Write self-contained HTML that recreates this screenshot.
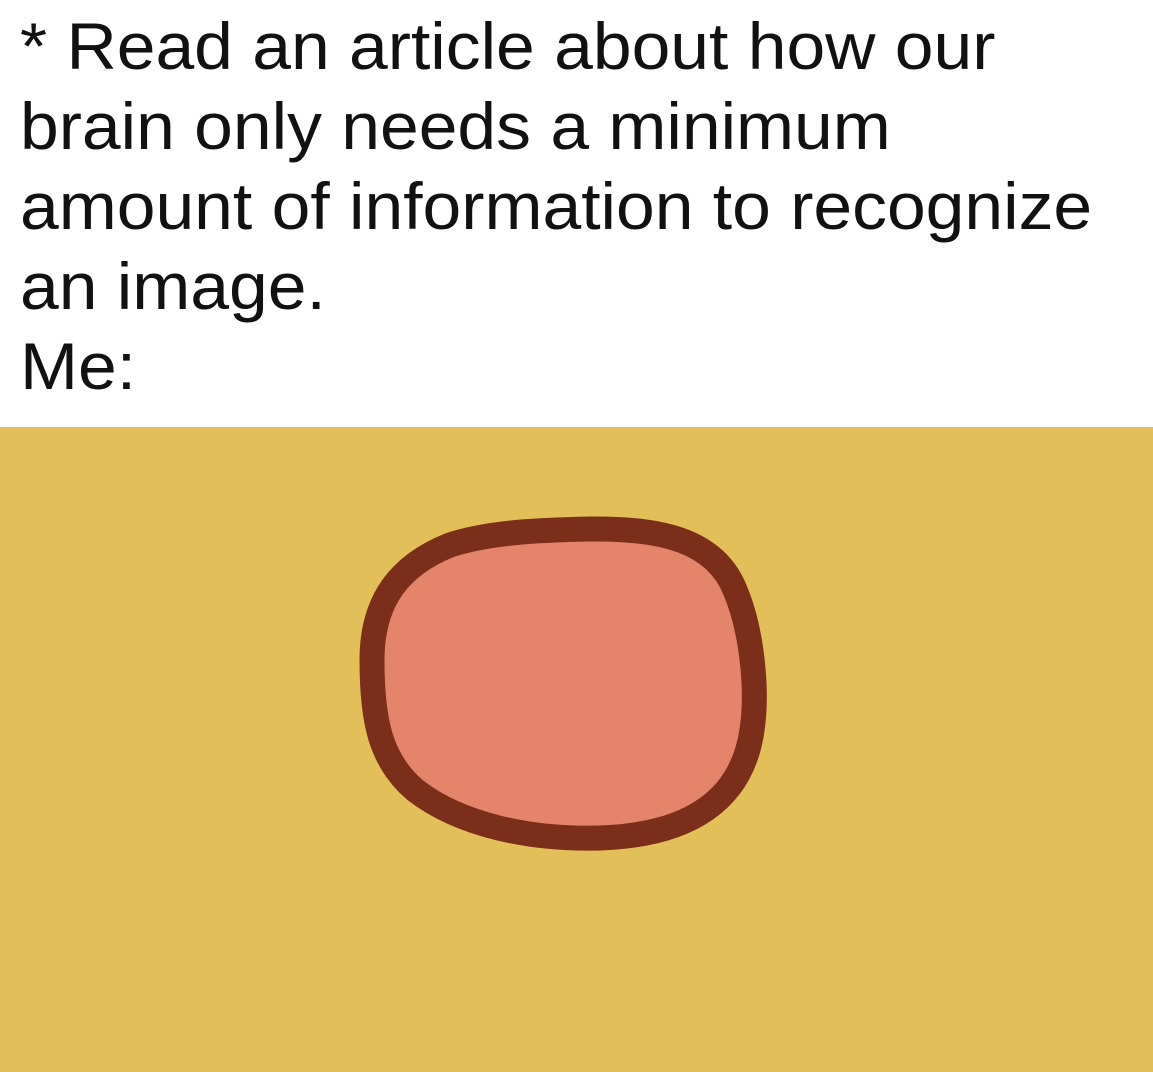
<!DOCTYPE html>
<html><head><style>
html,body{margin:0;padding:0;width:1153px;height:1072px;overflow:hidden;background:#fff}
.t{position:absolute;left:20px;top:6px;font-family:"Liberation Sans",Arial,sans-serif;font-size:66px;line-height:80px;color:#111;white-space:pre;transform:scaleX(1.055);transform-origin:left top}
.y{position:absolute;left:0;top:427px;width:1153px;height:645px;background:#e2bf58}
svg{position:absolute;left:0;top:0}
</style></head><body>
<div class="t">* Read an article about how our
brain only needs a minimum
amount of information to recognize
an image.
Me:</div>
<div class="y"></div>
<svg width="1153" height="1072">
<path d="M 590 529 C 660 528 715 540 735 590 C 752 630 758 690 752 730 C 742 800 690 835 600 838 C 530 840 460 825 415 790 C 380 760 372 720 372 660 C 372 600 400 565 450 545 C 490 532 540 530 590 529 Z" fill="#e4846b" stroke="#7b2f1a" stroke-width="25"/>
</svg>
</body></html>
